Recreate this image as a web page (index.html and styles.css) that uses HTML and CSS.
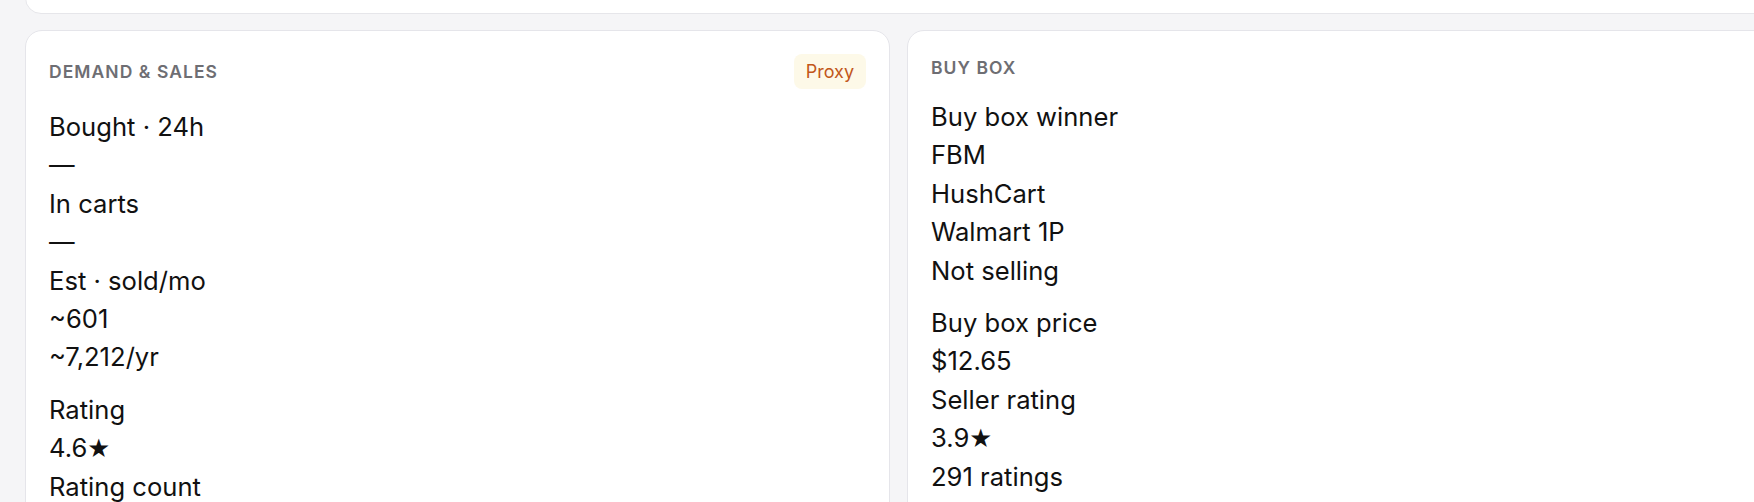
FILE: index.html
```html
<!DOCTYPE html>
<html lang="en">
<head>
    <meta charset="UTF-8">
    <title>Listing detail</title>
    <link rel="stylesheet" href="styles.css">
</head>
<body>
    <div class="page">
        <div class="summary"></div>

        <div class="panels">
            <section class="card">
                <div class="card-head">
                    <h2>Demand &amp; Sales</h2>
                    <span class="badge">Proxy</span>
                </div>
                <div class="group">
                    <div>Bought · 24h</div>
                    <div>—</div>
                    <div>In carts</div>
                    <div>—</div>
                    <div>Est · sold/mo</div>
                    <div>~601</div>
                    <div>~7,212/yr</div>
                </div>
                <div class="group">
                    <div>Rating</div>
                    <div>4.6<span class="star">★</span></div>
                    <div>Rating count</div>
                    <div>1,284</div>
                </div>
            </section>

            <section class="card">
                <div class="card-head plain">
                    <h2>Buy Box</h2>
                </div>
                <div class="group">
                    <div>Buy box winner</div>
                    <div>FBM</div>
                    <div>HushCart</div>
                    <div>Walmart 1P</div>
                    <div>Not selling</div>
                </div>
                <div class="group">
                    <div>Buy box price</div>
                    <div>$12.65</div>
                    <div>Seller rating</div>
                    <div>3.9<span class="star">★</span></div>
                    <div>291 ratings</div>
                </div>
            </section>
        </div>
    </div>
</body>
</html>
```

FILE: styles.css
```css
body {
    margin: 0;
    background-color: #f5f5f7;
    font-family: "Inter", "Noto Sans", sans-serif;
    color: #111;
    overflow: hidden;
}
.page {
    width: 1747px;
    padding-left: 25px;
}
.summary {
    height: 54px;
    margin-top: -40px;
    background: #fff;
    border: 1px solid #e6e6ea;
    border-radius: 16px;
    box-sizing: border-box;
}
.panels {
    display: grid;
    grid-template-columns: 1fr 1fr;
    gap: 17px;
    margin-top: 16px;
}
.card {
    background: #fff;
    border: 1px solid #e5e5ea;
    border-radius: 17px;
    padding: 23px;
    min-height: 520px;
}
.card-head {
    display: flex;
    justify-content: space-between;
    align-items: center;
    height: 35px;
    margin-bottom: 19px;
}
.card-head.plain {
    height: 26px;
    margin-bottom: 18px;
}
.card-head h2 {
    margin: 0;
    font-size: 17.5px;
    font-weight: 600;
    text-transform: uppercase;
    letter-spacing: 0.06em;
    color: #6e6e73;
}
.badge {
    height: 35px;
    line-height: 35px;
    padding: 0 12px;
    border-radius: 8px;
    background: #fdf9e8;
    color: #c2571a;
    font-size: 18px;
}
.group {
    font-size: 25.6px;
    line-height: 1.5;
}
.group + .group {
    margin-top: 14px;
}
.star {
    font-family: "DejaVu Sans", sans-serif;
}
```
